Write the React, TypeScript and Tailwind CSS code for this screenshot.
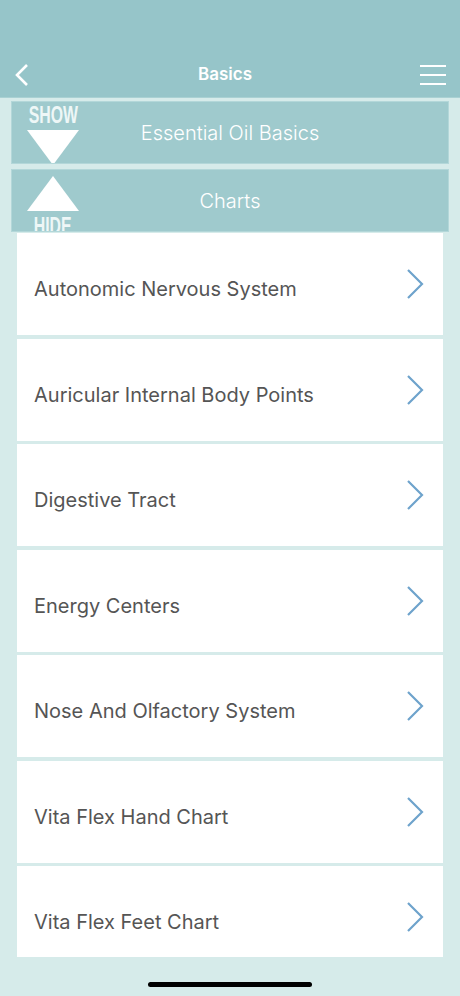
import React from 'react';

const items = [
  'Autonomic Nervous System',
  'Auricular Internal Body Points',
  'Digestive Tract',
  'Energy Centers',
  'Nose And Olfactory System',
  'Vita Flex Hand Chart',
  'Vita Flex Feet Chart',
];

function Chevron() {
  return (
    <svg width="20" height="32" viewBox="0 0 20 32" fill="none">
      <path d="M3 2 L17 16 L3 30" stroke="#6ea3cc" strokeWidth="2.2" />
    </svg>
  );
}

export default function App() {
  return (
    <div
      className="relative w-[460px] h-[996px] overflow-hidden bg-[#d6ebea]"
      style={{ fontFamily: 'Inter, "Noto Sans", sans-serif' }}
    >
      {/* header */}
      <div className="h-[98px] bg-[#96c5c9] flex items-end pb-[10px] px-[14px] border-b border-[#a9d1d3]">
        <div className="flex items-center justify-between w-full h-[24px]">
          <svg width="16" height="24" viewBox="0 0 16 24" fill="none">
            <path d="M13 2 L3 12 L13 22" stroke="white" strokeWidth="2.6" />
          </svg>
          <span className="text-white text-[17px] font-semibold">Basics</span>
          <svg width="28" height="22" viewBox="0 0 28 22" className="mr-[-2px]">
            <rect x="0" y="1" width="26" height="2" fill="white" />
            <rect x="0" y="10" width="26" height="2" fill="white" />
            <rect x="0" y="19" width="26" height="2" fill="white" />
          </svg>
        </div>
      </div>

      {/* section headers */}
      <div className="px-[11px] pt-[3px] flex flex-col gap-[5px]">
        <div className="relative h-[63px] bg-[#9fcacd] border border-[#b3d7d9] flex items-center justify-center overflow-hidden">
          <div className="absolute left-[14px] top-[0px] w-[54px] flex flex-col items-center">
            <span
              className="text-[#eef7f7] text-[24px] leading-[26px] font-bold scale-x-[0.66] whitespace-nowrap"
              style={{ fontFamily: '"Liberation Sans", sans-serif' }}
            >
              SHOW
            </span>
            <svg width="52" height="35" viewBox="0 0 52 35" className="mt-[2px]">
              <polygon points="0,0 52,0 26,35" fill="white" />
            </svg>
          </div>
          <span className="text-white text-[20px] font-light">Essential Oil Basics</span>
        </div>
        <div className="relative h-[63px] bg-[#9fcacd] border border-[#b3d7d9] flex items-center justify-center overflow-hidden">
          <div className="absolute left-[14px] top-[6px] w-[54px] flex flex-col items-center">
            <svg width="52" height="35" viewBox="0 0 52 35">
              <polygon points="26,0 52,35 0,35" fill="white" />
            </svg>
            <span
              className="text-[#eef7f7] text-[24px] leading-[26px] font-bold scale-x-[0.66] mt-[2px] whitespace-nowrap"
              style={{ fontFamily: '"Liberation Sans", sans-serif' }}
            >
              HIDE
            </span>
          </div>
          <span className="text-white text-[20px] font-light">Charts</span>
        </div>
      </div>

      {/* list, cut off above the home indicator */}
      <div className="px-[17px] mt-[1px] h-[724px] overflow-hidden flex flex-col gap-[3.5px]">
        {items.map((label) => (
          <div
            key={label}
            className="h-[102px] shrink-0 bg-white flex items-center justify-between pl-[17px] pr-[18px]"
          >
            <span className="text-[#555555] text-[20px] pt-[10px]">{label}</span>
            <Chevron />
          </div>
        ))}
      </div>

      {/* home indicator */}
      <div className="absolute bottom-[9px] left-[148px] w-[164px] h-[5px] rounded-full bg-black" />
    </div>
  );
}
